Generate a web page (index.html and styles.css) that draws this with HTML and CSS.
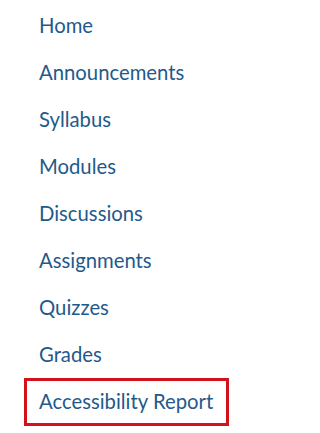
FILE: index.html
```html
<!DOCTYPE html>
<html lang="en">
<head>
<meta charset="utf-8">
<title>Course Navigation</title>
<link rel="stylesheet" href="styles.css">
</head>
<body>
<nav class="course-nav">
  <ul class="nav-list">
    <li class="nav-item"><a class="nav-link" href="#">Home</a></li>
    <li class="nav-item"><a class="nav-link" href="#">Announcements</a></li>
    <li class="nav-item"><a class="nav-link" href="#">Syllabus</a></li>
    <li class="nav-item"><a class="nav-link" href="#">Modules</a></li>
    <li class="nav-item"><a class="nav-link" href="#">Discussions</a></li>
    <li class="nav-item"><a class="nav-link" href="#">Assignments</a></li>
    <li class="nav-item"><a class="nav-link" href="#">Quizzes</a></li>
    <li class="nav-item"><a class="nav-link" href="#">Grades</a></li>
    <li class="nav-item nav-item--highlight"><a class="nav-link" href="#">Accessibility Report</a></li>
  </ul>
</nav>
</body>
</html>
```
FILE: styles.css
```css
html, body {
  margin: 0;
  padding: 0;
  background: #ffffff;
}

body {
  font-family: Lato, "Open Sans", sans-serif;
  width: 250px;
  height: 433px;
  overflow: hidden;
}

.course-nav {
  padding-top: 1.5px;
}

.nav-list {
  list-style: none;
  margin: 0 0 0 24px;
  padding: 0;
  width: 205px;
  display: flex;
  flex-direction: column;
}

.nav-item {
  height: 47px;
  box-sizing: border-box;
  padding-left: 15px;
  display: flex;
  align-items: center;
}

.nav-link {
  color: #1f5a8b;
  text-decoration: none;
  font-size: 20.3px;
  line-height: 47px;
  white-space: nowrap;
}

.nav-item--highlight {
  height: 48px;
  border: 3px solid #d3101c;
  padding-left: 12px;
}
```
